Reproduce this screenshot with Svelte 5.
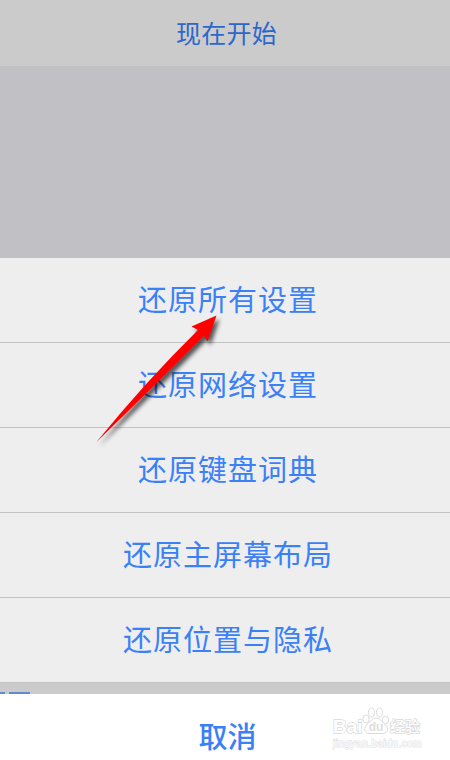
<script lang="ts">
  const actions: string[] = [
    '还原所有设置',
    '还原网络设置',
    '还原键盘词典',
    '还原主屏幕布局',
    '还原位置与隐私'
  ];
</script>

<div class="screen">
  <header class="start-row">现在开始</header>
  <div class="backdrop"></div>

  <div class="sheet">
    {#each actions as action}
      <button class="action">{action}</button>
    {/each}
  </div>

  <div class="gap">
    <span class="peek short"></span>
    <span class="peek"></span>
  </div>

  <button class="cancel">取消</button>

  <svg class="arrow" viewBox="0 0 150 150" aria-hidden="true">
    <path
      d="M16 142.5 Q66 81 118 30 L111.5 26.5 L136.5 15.5 L127.5 41.5 L124 35.5 Q73 87 16 142.5 Z"
      fill="#ff0000"
    />
  </svg>

  <div class="watermark">
    <div class="brand">
      <span class="bai">Bai</span>
      <svg class="paw" viewBox="0 0 28 30" aria-hidden="true">
        <ellipse cx="4" cy="14" rx="3.2" ry="4" />
        <ellipse cx="9.5" cy="7.5" rx="3" ry="4.5" />
        <ellipse cx="17.5" cy="7.5" rx="3" ry="4.5" />
        <ellipse cx="23.5" cy="15" rx="3.2" ry="4" />
        <path d="M14 13 C10 13 9 16 6 18.5 C1 22 2 28.5 7 28.5 H21 C27 28.5 27 22 22 18.5 C19 16 18 13 14 13 Z" />
        <text x="14" y="26" text-anchor="middle">du</text>
      </svg>
      <span class="cn">经验</span>
    </div>
    <div class="site">jingyan.baidu.com</div>
  </div>
</div>

<style>
  :global(body) {
    margin: 0;
  }

  .screen {
    position: relative;
    display: flex;
    flex-direction: column;
    width: 450px;
    height: 760px;
    overflow: hidden;
    background: #c1c0c5;
    font-family: 'Noto Sans CJK SC', sans-serif;
  }

  .start-row {
    display: flex;
    align-items: center;
    justify-content: center;
    flex: 0 0 66px;
    box-sizing: border-box;
    padding-bottom: 3px;
    padding-left: 3px;
    background: #cbcbcb;
    color: #2d67cc;
    font-size: 25px;
    letter-spacing: 0.2px;
  }

  .backdrop {
    flex: 1;
    background: #c1c0c5;
  }

  .sheet {
    display: flex;
    flex-direction: column;
  }

  .action {
    height: 85px;
    padding: 0 0 4px 6px;
    border: 0;
    border-bottom: 1px solid #c3c3c5;
    background: #eeeeef;
    color: #3a80f7;
    font-family: inherit;
    font-size: 29px;
    letter-spacing: 1px;
  }

  .gap {
    display: flex;
    align-items: flex-end;
    gap: 4px;
    flex: 0 0 11px;
    background: #cbcbcb;
  }

  .peek {
    width: 21px;
    height: 2px;
    background: #628bce;
  }

  .peek.short {
    width: 5px;
  }

  .cancel {
    flex: 0 0 66px;
    padding: 16px 0 0 5px;
    border: 0;
    background: #fff;
    color: #3a80f7;
    font-family: inherit;
    font-size: 29px;
    font-weight: 500;
  }

  .arrow {
    position: absolute;
    left: 80px;
    top: 300px;
    width: 150px;
    height: 150px;
    overflow: visible;
    filter: drop-shadow(3px 4px 2px rgba(0, 0, 0, 0.65));
  }

  .watermark {
    position: absolute;
    left: 333px;
    top: 704px;
    width: 92px;
    color: #fff;
    font-family: 'Liberation Sans', 'Noto Sans CJK SC', sans-serif;
    font-weight: 700;
  }

  .brand {
    display: flex;
    align-items: flex-end;
    height: 33px;
    -webkit-text-stroke: 1.4px #dadada;
    paint-order: stroke fill;
  }

  .bai {
    width: 31px;
    font-size: 19px;
    line-height: 21px;
    letter-spacing: 0;
  }

  .paw {
    width: 28px;
    height: 30px;
    margin: 0 0 2px -2px;
    fill: #fff;
    stroke: #dcdcdc;
    stroke-width: 1;
    paint-order: normal;
  }

  .paw text {
    font-size: 12px;
    stroke: none;
    fill: #dedede;
    -webkit-text-stroke: 0;
  }

  .cn {
    font-family: 'Noto Sans CJK SC', sans-serif;
    font-size: 15px;
    font-weight: 500;
    line-height: 22px;
  }

  .site {
    color: #fff;
    font-size: 10px;
    font-weight: 400;
    line-height: 13px;
    letter-spacing: 0.5px;
    white-space: nowrap;
    -webkit-text-stroke: 1px #dedede;
    paint-order: stroke fill;
  }
</style>
